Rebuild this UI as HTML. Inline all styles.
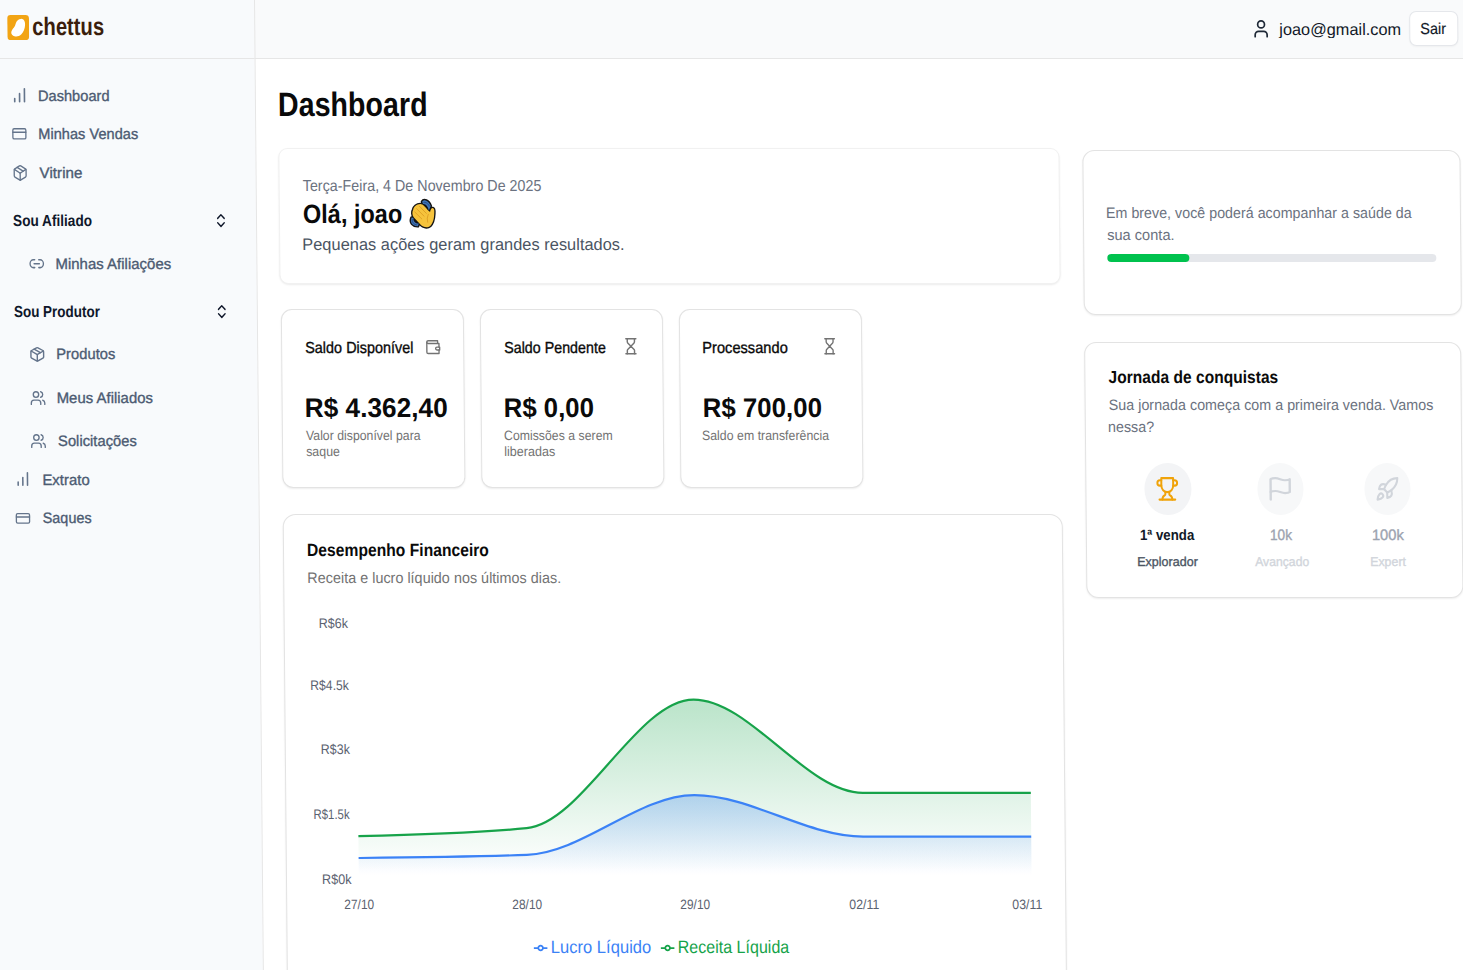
<!DOCTYPE html>
<html><head><meta charset="utf-8"><style>
html,body{margin:0;padding:0;}
body{width:1463px;height:970px;overflow:hidden;background:#f8fafc;position:relative;font-family:"Liberation Sans",sans-serif;}
#bgmain{position:absolute;left:0;top:0;width:1463px;height:970px;background:#fff}
#page{position:absolute;left:0;top:0;width:1463px;height:970px;transform-origin:0 0;transform:matrix(1,0,0.0091,1,0,0);background:#fff}
.t{position:absolute;white-space:nowrap;line-height:1;transform-origin:0 0;}
</style></head><body>
<div id="page">
<div style="position:absolute;left:-40.00px;top:0.00px;width:294.00px;height:1000.00px;background:#f8fafc"></div>
<div style="position:absolute;left:254.00px;top:0.00px;width:1300.00px;height:58.00px;background:#f9fafb"></div>
<div style="position:absolute;left:-40.00px;top:57.50px;width:294.00px;height:1.20px;background:#e6e6e6"></div>
<div style="position:absolute;left:254.00px;top:57.50px;width:1300.00px;height:1.20px;background:#e6e6e6"></div>
<div style="position:absolute;left:253.50px;top:0.00px;width:1.20px;height:1000.00px;background:#e6e6e6"></div>
<svg style="position:absolute;left:7.05px;top:14.8px;width:21.8px;height:25.2px" viewBox="0 0 22 25.4"><rect x="0" y="0" width="22" height="25.4" rx="3.5" fill="#f2a414"/><path d="M13.8 3.9 C16.5 3.6 18.4 6.5 18 10.3 C17.7 13.5 16.6 17 14.2 19.5 C12.5 21.2 10 22 8.2 21.7 C5.5 21.3 3.7 19.8 4 17.5 C4.3 15.5 5.5 14 6.8 12.5 C7.8 11.3 8.2 10 8.8 8 C9.5 5.8 11.5 4 13.8 3.9 Z" fill="#fff"/></svg>
<div class="t" style="left:32.25px;top:14.10px;font-size:25.10px;font-weight:700;color:#3b1e0c;transform:scaleX(0.8046);">chettus</div>
<svg style="position:absolute;left:1254.24px;top:19.80px;width:13.70px;height:17.50px;overflow:visible;" viewBox="4 2 16 20" preserveAspectRatio="none" fill="none" stroke="#1f2937" stroke-width="2" stroke-linecap="round" stroke-linejoin="round"><path d="M19 21v-2a4 4 0 0 0-4-4H9a4 4 0 0 0-4 4v2"/><circle cx="12" cy="7" r="4"/></svg>
<div class="t" style="left:1279.42px;top:21.00px;font-size:16.50px;color:#111827;transform:scaleX(0.9896);">joao@gmail.com</div>
<div style="position:absolute;left:1408.95px;top:11.40px;width:48.80px;height:34.30px;background:#fff;border:1px solid #e5e7eb;border-radius:7px;box-sizing:border-box;box-shadow:0 1px 2px rgba(0,0,0,0.04)"></div>
<div class="t" style="left:1420.06px;top:20.80px;font-size:15.85px;color:#111827;transform:scaleX(0.9174);-webkit-text-stroke:0.15px currentColor">Sair</div>
<div class="t" style="left:37.43px;top:87.60px;font-size:15.13px;color:#4c5b72;transform:scaleX(0.9683);-webkit-text-stroke:0.35px currentColor">Dashboard</div>
<div class="t" style="left:37.47px;top:126.00px;font-size:15.13px;color:#4c5b72;transform:scaleX(0.9663);-webkit-text-stroke:0.35px currentColor">Minhas Vendas</div>
<div class="t" style="left:38.20px;top:164.70px;font-size:15.13px;color:#4c5b72;transform:scaleX(1.0060);-webkit-text-stroke:0.35px currentColor">Vitrine</div>
<div class="t" style="left:10.87px;top:213.00px;font-size:16.00px;font-weight:700;color:#0f172a;transform:scaleX(0.8524);">Sou Afiliado</div>
<div class="t" style="left:52.77px;top:255.70px;font-size:15.13px;color:#4c5b72;transform:scaleX(0.9913);-webkit-text-stroke:0.35px currentColor">Minhas Afiliações</div>
<div class="t" style="left:10.75px;top:303.50px;font-size:16.00px;font-weight:700;color:#0f172a;transform:scaleX(0.8433);">Sou Produtor</div>
<div class="t" style="left:52.96px;top:346.20px;font-size:15.13px;color:#4c5b72;transform:scaleX(0.9753);-webkit-text-stroke:0.35px currentColor">Produtos</div>
<div class="t" style="left:53.15px;top:389.50px;font-size:15.13px;color:#4c5b72;transform:scaleX(0.9880);-webkit-text-stroke:0.35px currentColor">Meus Afiliados</div>
<div class="t" style="left:53.66px;top:432.80px;font-size:15.13px;color:#4c5b72;transform:scaleX(0.9764);-webkit-text-stroke:0.35px currentColor">Solicitações</div>
<div class="t" style="left:37.70px;top:471.80px;font-size:15.13px;color:#4c5b72;transform:scaleX(0.9870);-webkit-text-stroke:0.35px currentColor">Extrato</div>
<div class="t" style="left:37.87px;top:509.60px;font-size:15.13px;color:#4c5b72;transform:scaleX(0.9520);-webkit-text-stroke:0.35px currentColor">Saques</div>
<svg style="position:absolute;left:12.93px;top:88.20px;width:11.40px;height:14.50px;overflow:visible;" viewBox="5 3 14 18" preserveAspectRatio="none" fill="none" stroke="#64748b" stroke-width="2" stroke-linecap="round" stroke-linejoin="round"><path d="M6 20v-4"/><path d="M12 20v-10"/><path d="M18 20v-16"/></svg>
<svg style="position:absolute;left:11.48px;top:128.20px;width:14.30px;height:11.60px;overflow:visible;" viewBox="1 4 22 16" preserveAspectRatio="none" fill="none" stroke="#64748b" stroke-width="2" stroke-linecap="round" stroke-linejoin="round"><rect width="20" height="14" x="2" y="5" rx="2"/><path d="M2 10h20"/></svg>
<svg style="position:absolute;left:12.23px;top:165.00px;width:13.20px;height:15.90px;overflow:visible;" viewBox="2 1 20 22" preserveAspectRatio="none" fill="none" stroke="#64748b" stroke-width="2" stroke-linecap="round" stroke-linejoin="round"><path d="M11 21.73a2 2 0 0 0 2 0l7-4A2 2 0 0 0 21 16V8a2 2 0 0 0-1-1.73l-7-4a2 2 0 0 0-2 0l-7 4A2 2 0 0 0 3 8v8a2 2 0 0 0 1 1.73z"/><path d="M12 22V12"/><path d="m3.3 7 7.703 4.734a2 2 0 0 0 1.994 0L20.7 7"/><path d="m7.5 4.27 9 5.15"/></svg>
<svg style="position:absolute;left:27.00px;top:258.70px;width:14.70px;height:9.40px;overflow:visible;" viewBox="1 6 22 12" preserveAspectRatio="none" fill="none" stroke="#64748b" stroke-width="2" stroke-linecap="round" stroke-linejoin="round"><path d="M9 17H7A5 5 0 0 1 7 7h2"/><path d="M15 7h2a5 5 0 1 1 0 10h-2"/><path d="M8 12h8"/></svg>
<svg style="position:absolute;left:27.07px;top:347.30px;width:14.10px;height:14.70px;overflow:visible;" viewBox="2 1 20 22" preserveAspectRatio="none" fill="none" stroke="#64748b" stroke-width="2" stroke-linecap="round" stroke-linejoin="round"><path d="M11 21.73a2 2 0 0 0 2 0l7-4A2 2 0 0 0 21 16V8a2 2 0 0 0-1-1.73l-7-4a2 2 0 0 0-2 0l-7 4A2 2 0 0 0 3 8v8a2 2 0 0 0 1 1.73z"/><path d="M12 22V12"/><path d="m3.3 7 7.703 4.734a2 2 0 0 0 1.994 0L20.7 7"/><path d="m7.5 4.27 9 5.15"/></svg>
<svg style="position:absolute;left:27.08px;top:390.60px;width:14.80px;height:14.10px;overflow:visible;" viewBox="1 2 22 20" preserveAspectRatio="none" fill="none" stroke="#64748b" stroke-width="2" stroke-linecap="round" stroke-linejoin="round"><path d="M16 21v-2a4 4 0 0 0-4-4H6a4 4 0 0 0-4 4v2"/><circle cx="9" cy="7" r="4"/><path d="M22 21v-2a4 4 0 0 0-3-3.87"/><path d="M16 3.13a4 4 0 0 1 0 7.75"/></svg>
<svg style="position:absolute;left:26.99px;top:433.90px;width:14.90px;height:14.10px;overflow:visible;" viewBox="1 2 22 20" preserveAspectRatio="none" fill="none" stroke="#64748b" stroke-width="2" stroke-linecap="round" stroke-linejoin="round"><path d="M16 21v-2a4 4 0 0 0-4-4H6a4 4 0 0 0-4 4v2"/><circle cx="9" cy="7" r="4"/><path d="M22 21v-2a4 4 0 0 0-3-3.87"/><path d="M16 3.13a4 4 0 0 1 0 7.75"/></svg>
<svg style="position:absolute;left:13.34px;top:471.80px;width:10.90px;height:14.00px;overflow:visible;" viewBox="5 3 14 18" preserveAspectRatio="none" fill="none" stroke="#64748b" stroke-width="2" stroke-linecap="round" stroke-linejoin="round"><path d="M6 20v-4"/><path d="M12 20v-10"/><path d="M18 20v-16"/></svg>
<svg style="position:absolute;left:11.48px;top:512.90px;width:14.50px;height:10.80px;overflow:visible;" viewBox="1 4 22 16" preserveAspectRatio="none" fill="none" stroke="#64748b" stroke-width="2" stroke-linecap="round" stroke-linejoin="round"><rect width="20" height="14" x="2" y="5" rx="2"/><path d="M2 10h20"/></svg>
<svg style="position:absolute;left:214.89px;top:213.90px;width:7.90px;height:13.10px;overflow:visible;" viewBox="6 3 12 18" preserveAspectRatio="none" fill="none" stroke="#0f172a" stroke-width="2" stroke-linecap="round" stroke-linejoin="round"><path d="m7 15 5 5 5-5"/><path d="m7 9 5-5 5 5"/></svg>
<svg style="position:absolute;left:214.77px;top:304.80px;width:7.90px;height:13.10px;overflow:visible;" viewBox="6 3 12 18" preserveAspectRatio="none" fill="none" stroke="#0f172a" stroke-width="2" stroke-linecap="round" stroke-linejoin="round"><path d="m7 15 5 5 5-5"/><path d="m7 9 5-5 5 5"/></svg>
<div class="t" style="left:277.35px;top:87.60px;font-size:33.89px;font-weight:700;color:#0a0a0a;transform:scaleX(0.8458);">Dashboard</div>
<div style="position:absolute;left:277.10px;top:148.40px;width:781.10px;height:135.80px;background:#fff;border:1px solid #e3e3e3;box-sizing:border-box;box-shadow:0 1px 2px rgba(0,0,0,0.07);border-radius:9px;border-color:#f1f1f1;box-shadow:0 1px 2px rgba(0,0,0,0.08)"></div>
<div class="t" style="left:301.37px;top:178.30px;font-size:15.85px;color:#6b7280;transform:scaleX(0.9036);">Terça-Feira, 4 De Novembro De 2025</div>
<div class="t" style="left:300.52px;top:200.60px;font-size:26.60px;font-weight:700;color:#0a0a0a;transform:scaleX(0.8839);">Olá, joao</div>
<div class="t" style="left:300.43px;top:237.20px;font-size:16.73px;color:#4b5563;transform:scaleX(0.9826);">Pequenas ações geram grandes resultados.</div>
<div style="position:absolute;left:277.60px;top:309.00px;width:183.30px;height:179.30px;background:#fff;border:1px solid #e3e3e3;box-sizing:border-box;box-shadow:0 1px 2px rgba(0,0,0,0.07);border-radius:11px"></div>
<div style="position:absolute;left:476.90px;top:309.00px;width:183.30px;height:179.30px;background:#fff;border:1px solid #e3e3e3;box-sizing:border-box;box-shadow:0 1px 2px rgba(0,0,0,0.07);border-radius:11px"></div>
<div style="position:absolute;left:676.20px;top:309.00px;width:183.30px;height:179.30px;background:#fff;border:1px solid #e3e3e3;box-sizing:border-box;box-shadow:0 1px 2px rgba(0,0,0,0.07);border-radius:11px"></div>
<div class="t" style="left:301.67px;top:339.50px;font-size:16.00px;color:#0a0a0a;transform:scaleX(0.9023);-webkit-text-stroke:0.35px currentColor">Saldo Disponível</div>
<svg style="position:absolute;left:422.64px;top:339.60px;width:14.20px;height:14.30px;overflow:visible;" viewBox="2 2 21 20" preserveAspectRatio="none" fill="none" stroke="#737373" stroke-width="2" stroke-linecap="round" stroke-linejoin="round"><path d="M21 12V7H5a2 2 0 0 1 0-4h14v4"/><path d="M3 5v14a2 2 0 0 0 2 2h16v-5"/><path d="M18 12a2 2 0 0 0 0 4h4v-4Z"/></svg>
<div class="t" style="left:301.49px;top:395.40px;font-size:27.05px;font-weight:700;color:#0a0a0a;transform:scaleX(0.9698);">R$ 4.362,40</div>
<div class="t" style="left:301.93px;top:429.00px;font-size:13.53px;color:#737373;transform:scaleX(0.9097);">Valor disponível para</div>
<div class="t" style="left:301.54px;top:445.40px;font-size:13.53px;color:#737373;transform:scaleX(0.9175);">saque</div>
<div class="t" style="left:500.77px;top:339.50px;font-size:16.00px;color:#0a0a0a;transform:scaleX(0.8924);-webkit-text-stroke:0.35px currentColor">Saldo Pendente</div>
<svg style="position:absolute;left:621.75px;top:338.30px;width:11.50px;height:16.40px;overflow:visible;" viewBox="4 1 16 22" preserveAspectRatio="none" fill="none" stroke="#737373" stroke-width="2" stroke-linecap="round" stroke-linejoin="round"><path d="M5 22h14"/><path d="M5 2h14"/><path d="M17 22v-4.172a2 2 0 0 0-.586-1.414L12 12l-4.414 4.414A2 2 0 0 0 7 17.828V22"/><path d="M7 2v4.172a2 2 0 0 0 .586 1.414L12 12l4.414-4.414A2 2 0 0 0 17 6.172V2"/></svg>
<div class="t" style="left:500.42px;top:395.40px;font-size:27.05px;font-weight:700;color:#0a0a0a;transform:scaleX(0.9517);">R$ 0,00</div>
<div class="t" style="left:500.47px;top:429.00px;font-size:13.53px;color:#737373;transform:scaleX(0.9104);">Comissões a serem</div>
<div class="t" style="left:500.07px;top:445.40px;font-size:13.53px;color:#737373;transform:scaleX(0.9330);">liberadas</div>
<div class="t" style="left:698.70px;top:339.50px;font-size:16.00px;color:#0a0a0a;transform:scaleX(0.9169);-webkit-text-stroke:0.35px currentColor">Processando</div>
<svg style="position:absolute;left:821.35px;top:338.30px;width:11.00px;height:16.40px;overflow:visible;" viewBox="4 1 16 22" preserveAspectRatio="none" fill="none" stroke="#737373" stroke-width="2" stroke-linecap="round" stroke-linejoin="round"><path d="M5 22h14"/><path d="M5 2h14"/><path d="M17 22v-4.172a2 2 0 0 0-.586-1.414L12 12l-4.414 4.414A2 2 0 0 0 7 17.828V22"/><path d="M7 2v4.172a2 2 0 0 0 .586 1.414L12 12l4.414-4.414A2 2 0 0 0 17 6.172V2"/></svg>
<div class="t" style="left:699.02px;top:395.40px;font-size:27.05px;font-weight:700;color:#0a0a0a;transform:scaleX(0.9552);">R$ 700,00</div>
<div class="t" style="left:698.47px;top:429.00px;font-size:13.53px;color:#737373;transform:scaleX(0.9143);">Saldo em transferência</div>
<div style="position:absolute;left:278.30px;top:514.00px;width:779.50px;height:520.00px;background:#fff;border:1px solid #e3e3e3;box-sizing:border-box;box-shadow:0 1px 2px rgba(0,0,0,0.07);border-radius:13px"></div>
<div class="t" style="left:301.90px;top:541.70px;font-size:17.75px;font-weight:700;color:#0a0a0a;transform:scaleX(0.8823);">Desempenho Financeiro</div>
<div class="t" style="left:301.77px;top:569.70px;font-size:15.27px;color:#737373;transform:scaleX(0.9439);">Receita e lucro líquido nos últimos dias.</div>
<svg style="position:absolute;left:0;top:0;width:1463px;height:970px;overflow:visible" viewBox="0 0 1463 970">
<defs>
<linearGradient id="gg" x1="0" y1="0" x2="0" y2="1"><stop offset="5%" stop-color="#16a34a" stop-opacity="0.28"/><stop offset="95%" stop-color="#16a34a" stop-opacity="0"/></linearGradient>
<linearGradient id="gb" x1="0" y1="0" x2="0" y2="1"><stop offset="5%" stop-color="#3b82f6" stop-opacity="0.28"/><stop offset="95%" stop-color="#3b82f6" stop-opacity="0"/></linearGradient>
</defs>
<path d="M350.80,836.20 C406.90,834.87 463.00,833.53 519.10,828.20 C575.13,822.87 631.17,699.60 687.20,699.60 C743.30,699.60 799.40,792.80 855.50,792.80 C911.53,792.80 967.57,792.80 1023.60,792.80 L1023.60,879.4 L350.80,879.4 Z" fill="url(#gg)"/>
<path d="M350.80,836.20 C406.90,834.87 463.00,833.53 519.10,828.20 C575.13,822.87 631.17,699.60 687.20,699.60 C743.30,699.60 799.40,792.80 855.50,792.80 C911.53,792.80 967.57,792.80 1023.60,792.80" fill="none" stroke="#17a34a" stroke-width="2.2"/>
<path d="M350.80,858.00 C406.90,857.48 463.00,856.97 519.10,854.90 C575.13,852.84 631.17,795.20 687.20,795.20 C743.30,795.20 799.40,836.60 855.50,836.60 C911.53,836.60 967.57,836.60 1023.60,836.60 L1023.60,879.4 L350.80,879.4 Z" fill="url(#gb)"/>
<path d="M350.80,858.00 C406.90,857.48 463.00,856.97 519.10,854.90 C575.13,852.84 631.17,795.20 687.20,795.20 C743.30,795.20 799.40,836.60 855.50,836.60 C911.53,836.60 967.57,836.60 1023.60,836.60" fill="none" stroke="#3b82f6" stroke-width="2.2"/>
</svg>
<svg style="position:absolute;left:525.17px;top:941.3px;width:14px;height:14px" viewBox="0 0 32 32"><path d="M0,16h10.67A5.33,5.33,0,1,1,21.33,16H32M21.33,16A5.33,5.33,0,1,1,10.67,16" fill="none" stroke="#3b82f6" stroke-width="4"/></svg>
<svg style="position:absolute;left:652.07px;top:941.3px;width:14px;height:14px" viewBox="0 0 32 32"><path d="M0,16h10.67A5.33,5.33,0,1,1,21.33,16H32M21.33,16A5.33,5.33,0,1,1,10.67,16" fill="none" stroke="#16a34a" stroke-width="4"/></svg>
<div style="position:absolute;left:1081.20px;top:149.50px;width:377.40px;height:165.90px;background:#fff;border:1px solid #e3e3e3;box-sizing:border-box;box-shadow:0 1px 2px rgba(0,0,0,0.07);border-radius:12px"></div>
<div class="t" style="left:1103.98px;top:205.40px;font-size:15.13px;color:#6b7280;transform:scaleX(0.9445);">Em breve, você poderá acompanhar a saúde da</div>
<div class="t" style="left:1104.60px;top:227.00px;font-size:15.13px;color:#6b7280;transform:scaleX(0.9659);">sua conta.</div>
<div style="position:absolute;left:1104.75px;top:254.20px;width:329.60px;height:8.00px;background:#e5e7eb;border-radius:4px"></div>
<div style="position:absolute;left:1104.75px;top:254.20px;width:82.40px;height:8.00px;background:#00c24e;border-radius:4px"></div>
<div style="position:absolute;left:1081.10px;top:341.90px;width:376.90px;height:256.10px;background:#fff;border:1px solid #e3e3e3;box-sizing:border-box;box-shadow:0 1px 2px rgba(0,0,0,0.07);border-radius:12px"></div>
<div class="t" style="left:1105.35px;top:369.40px;font-size:17.45px;font-weight:700;color:#0a0a0a;transform:scaleX(0.8939);">Jornada de conquistas</div>
<div class="t" style="left:1104.60px;top:397.30px;font-size:15.13px;color:#6b7280;transform:scaleX(0.9473);">Sua jornada começa com a primeira venda. Vamos</div>
<div class="t" style="left:1104.18px;top:418.60px;font-size:15.13px;color:#6b7280;transform:scaleX(0.9481);">nessa?</div>
<div style="position:absolute;left:1140.25px;top:463.20px;width:46.40px;height:51.60px;background:#f3f4f6;border-radius:50%"></div>
<div style="position:absolute;left:1252.55px;top:463.20px;width:46.40px;height:51.60px;background:#f7f8f9;border-radius:50%"></div>
<div style="position:absolute;left:1359.95px;top:463.20px;width:46.40px;height:51.60px;background:#f7f8f9;border-radius:50%"></div>
<svg style="position:absolute;left:1152.15px;top:477.30px;width:21.70px;height:23.70px;overflow:visible;" viewBox="1 1 22 22" preserveAspectRatio="none" fill="none" stroke="#f0a30a" stroke-width="2" stroke-linecap="round" stroke-linejoin="round"><path d="M6 9H4.5a2.5 2.5 0 0 1 0-5H6"/><path d="M18 9h1.5a2.5 2.5 0 0 0 0-5H18"/><path d="M4 22h16"/><path d="M10 14.66V17c0 .55-.47.98-.97 1.21C7.85 18.75 7 20.24 7 22"/><path d="M14 14.66V17c0 .55.47.98.97 1.21C16.15 18.75 17 20.24 17 22"/><path d="M18 2H6v7a6 6 0 0 0 12 0V2Z"/></svg>
<svg style="position:absolute;left:1265.05px;top:477.30px;width:21.50px;height:23.70px;overflow:visible;" viewBox="3 1 18 22" preserveAspectRatio="none" fill="none" stroke="#d1d5db" stroke-width="2" stroke-linecap="round" stroke-linejoin="round"><path d="M4 15s1-1 4-1 5 2 8 2 4-1 4-1V3s-1 1-4 1-5-2-8-2-4 1-4 1z"/><path d="M4 22v-7"/></svg>
<svg style="position:absolute;left:1372.05px;top:477.30px;width:22.00px;height:23.70px;overflow:visible;" viewBox="1.5 1 21.5 21.5" preserveAspectRatio="none" fill="none" stroke="#d1d5db" stroke-width="2" stroke-linecap="round" stroke-linejoin="round"><path d="M4.5 16.5c-1.5 1.26-2 5-2 5s3.74-.5 5-2c.71-.84.7-2.13-.09-2.91a2.18 2.18 0 0 0-2.91-.09z"/><path d="m12 15-3-3a22 22 0 0 1 2-3.95A12.88 12.88 0 0 1 22 2c0 2.72-.78 7.5-6 11a22.35 22.35 0 0 1-4 2z"/><path d="M9 12H4s.55-3.03 2-4c1.62-1.08 5 0 5 0"/><path d="M12 15v5s3.03-.55 4-2c1.08-1.62 0-5 0-5"/></svg>
<div class="t" style="left:1135.05px;top:527.00px;font-size:14.98px;font-weight:700;color:#111827;transform:scaleX(0.8889);">1ª venda</div>
<div class="t" style="left:1264.80px;top:527.00px;font-size:14.98px;color:#9ca3af;transform:scaleX(0.9174);-webkit-text-stroke:0.35px currentColor">10k</div>
<div class="t" style="left:1366.62px;top:527.00px;font-size:14.98px;color:#9ca3af;transform:scaleX(0.9849);-webkit-text-stroke:0.35px currentColor">100k</div>
<div class="t" style="left:1132.31px;top:556.00px;font-size:12.80px;color:#4b5563;transform:scaleX(0.9805);-webkit-text-stroke:0.35px currentColor">Explorador</div>
<div class="t" style="left:1249.69px;top:556.00px;font-size:12.80px;color:#d1d5db;transform:scaleX(0.9536);-webkit-text-stroke:0.35px currentColor">Avançado</div>
<div class="t" style="left:1364.82px;top:556.00px;font-size:12.80px;color:#d1d5db;transform:scaleX(0.9678);-webkit-text-stroke:0.35px currentColor">Expert</div>
<div class="t" style="left:313.58px;top:872.80px;font-size:13.96px;color:#5b6270;transform:scaleX(0.9048);">R$0k</div>
<div class="t" style="left:306.36px;top:808.00px;font-size:13.96px;color:#5b6270;transform:scaleX(0.8185);">R$1.5k</div>
<div class="t" style="left:313.67px;top:743.30px;font-size:13.96px;color:#5b6270;transform:scaleX(0.8921);">R$3k</div>
<div class="t" style="left:303.68px;top:678.60px;font-size:13.96px;color:#5b6270;transform:scaleX(0.8740);">R$4.5k</div>
<div class="t" style="left:313.21px;top:616.80px;font-size:13.96px;color:#5b6270;transform:scaleX(0.8984);">R$6k</div>
<div class="t" style="left:335.55px;top:897.90px;font-size:13.60px;color:#5b6270;transform:scaleX(0.8821);">27/10</div>
<div class="t" style="left:504.25px;top:897.90px;font-size:13.60px;color:#5b6270;transform:scaleX(0.8821);">28/10</div>
<div class="t" style="left:671.75px;top:897.90px;font-size:13.60px;color:#5b6270;transform:scaleX(0.8821);">29/10</div>
<div class="t" style="left:840.85px;top:897.90px;font-size:13.60px;color:#5b6270;transform:scaleX(0.9098);">02/11</div>
<div class="t" style="left:1004.45px;top:897.90px;font-size:13.60px;color:#5b6270;transform:scaleX(0.9098);">03/11</div>
<div class="t" style="left:542.49px;top:938.80px;font-size:17.89px;color:#3b82f6;transform:scaleX(0.9291);">Lucro Líquido</div>
<div class="t" style="left:669.23px;top:938.80px;font-size:17.89px;color:#16a34a;transform:scaleX(0.8986);">Receita Líquida</div>
<svg style="position:absolute;left:408.06px;top:198.8px;width:24.30px;height:28.8px;overflow:visible" viewBox="215 190 525 620" preserveAspectRatio="none">
<g stroke="#141414" stroke-width="60" stroke-linejoin="round" fill="#141414">
 <path d="M480 250 C520 180 620 220 665 340 L625 440 C600 340 560 290 500 300 Z"/><path d="M250 590 C200 700 280 780 385 775 L405 720 C330 720 280 670 290 600 Z"/><path d="M285 420 C300 360 360 300 440 300 C500 300 560 380 610 440 L650 470 C660 420 680 380 710 385 C745 395 745 440 740 500 C735 600 720 700 650 770 C590 820 500 800 440 740 L300 590 C260 540 260 460 285 420 Z"/>
</g>
<g fill="#3f73b8"><path d="M480 250 C520 180 620 220 665 340 L625 440 C600 340 560 290 500 300 Z"/><path d="M250 590 C200 700 280 780 385 775 L405 720 C330 720 280 670 290 600 Z"/></g>
<g fill="none" stroke="#1d3b66" stroke-width="14"><path d="M510 265 C560 250 610 290 640 350"/><path d="M265 620 C250 690 300 745 370 748"/></g>
<path d="M285 420 C300 360 360 300 440 300 C500 300 560 380 610 440 L650 470 C660 420 680 380 710 385 C745 395 745 440 740 500 C735 600 720 700 650 770 C590 820 500 800 440 740 L300 590 C260 540 260 460 285 420 Z" fill="#f6c33c"/>
<g stroke="#d8961e" stroke-width="16" stroke-linecap="round" fill="none">
 <path d="M320 470 L470 620"/><path d="M360 400 L520 560"/><path d="M420 345 L570 500"/>
 <path d="M610 520 Q570 600 595 690"/>
</g></svg>
</div>
</body></html>
